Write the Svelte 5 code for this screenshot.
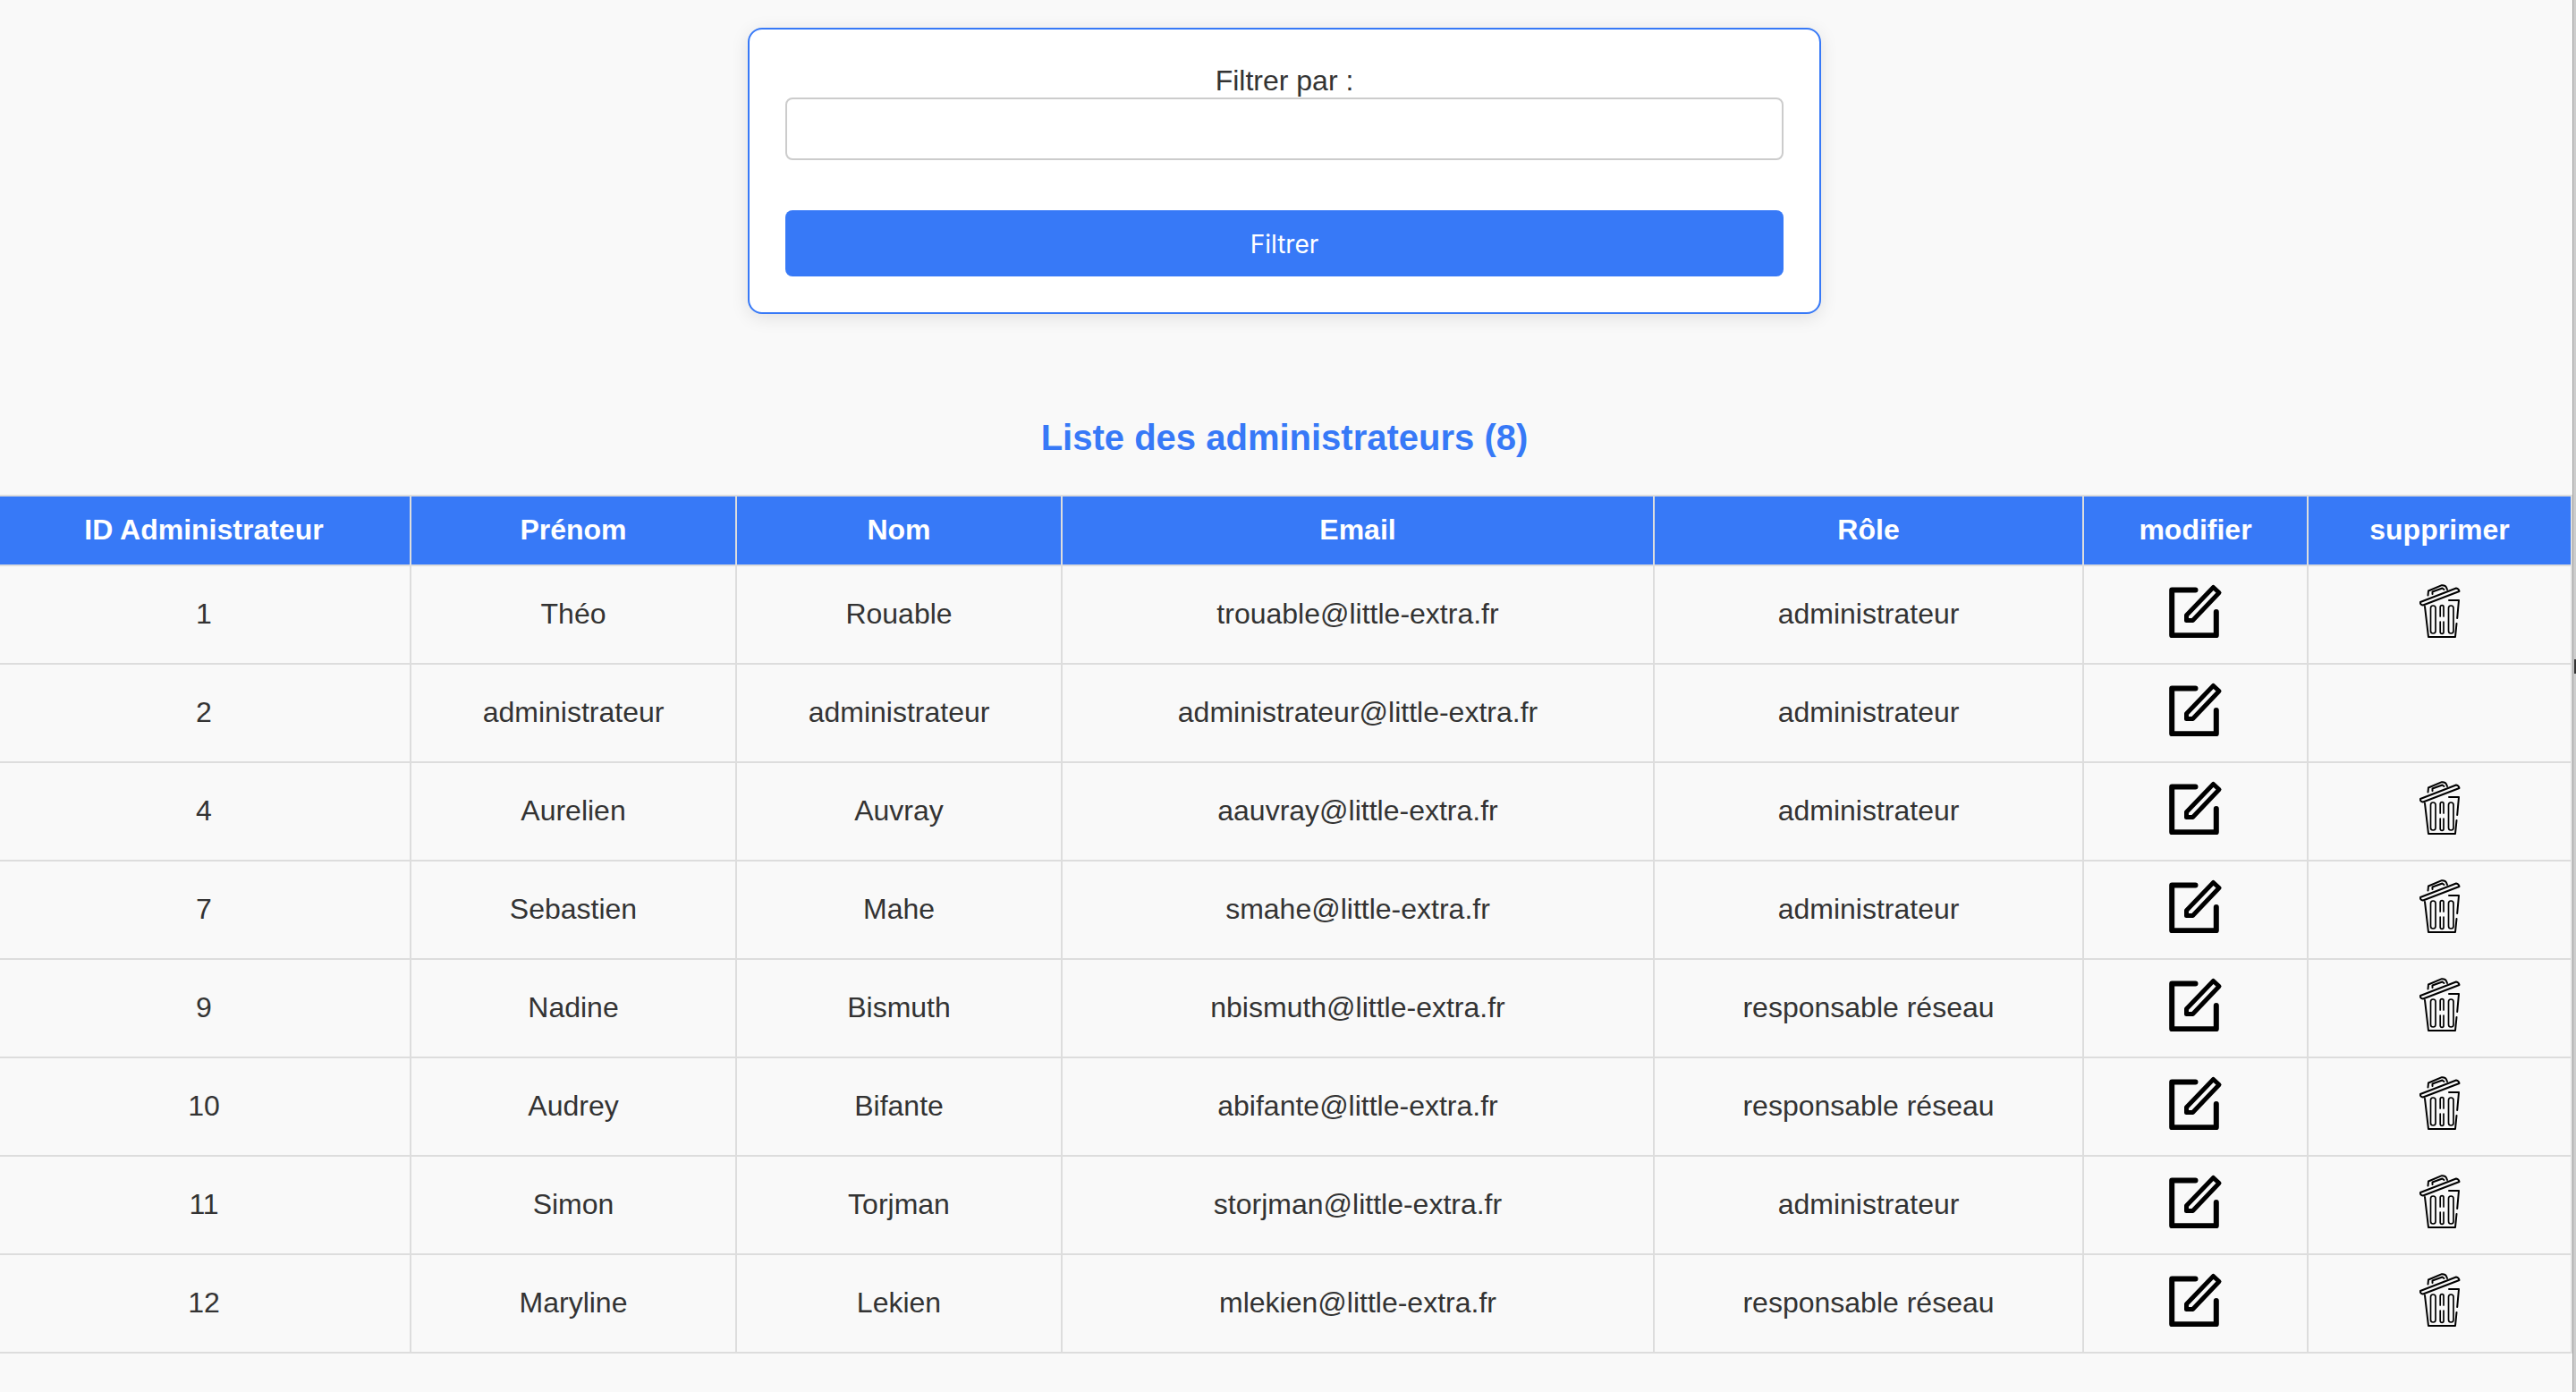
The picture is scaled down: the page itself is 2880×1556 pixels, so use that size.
<script>
  const admins = [
    { id: 1, prenom: "Théo", nom: "Rouable", email: "trouable@little-extra.fr", role: "administrateur" },
    { id: 2, prenom: "administrateur", nom: "administrateur", email: "administrateur@little-extra.fr", role: "administrateur", locked: true },
    { id: 4, prenom: "Aurelien", nom: "Auvray", email: "aauvray@little-extra.fr", role: "administrateur" },
    { id: 7, prenom: "Sebastien", nom: "Mahe", email: "smahe@little-extra.fr", role: "administrateur" },
    { id: 9, prenom: "Nadine", nom: "Bismuth", email: "nbismuth@little-extra.fr", role: "responsable réseau" },
    { id: 10, prenom: "Audrey", nom: "Bifante", email: "abifante@little-extra.fr", role: "responsable réseau" },
    { id: 11, prenom: "Simon", nom: "Torjman", email: "storjman@little-extra.fr", role: "administrateur" },
    { id: 12, prenom: "Maryline", nom: "Lekien", email: "mlekien@little-extra.fr", role: "responsable réseau" }
  ];
</script>

<div class="shell">
  <div class="page">
    <form class="filter" on:submit|preventDefault>
      <label for="filtre">Filtrer par :</label>
      <input id="filtre" type="text" />
      <button type="submit">Filtrer</button>
    </form>

    <h2>Liste des administrateurs ({admins.length})</h2>

    <table>
      <colgroup>
        <col style="width:459px" />
        <col style="width:364px" />
        <col style="width:364px" />
        <col style="width:662px" />
        <col style="width:480px" />
        <col style="width:251px" />
        <col />
      </colgroup>
      <thead>
        <tr>
          <th>ID Administrateur</th>
          <th>Prénom</th>
          <th>Nom</th>
          <th>Email</th>
          <th>Rôle</th>
          <th>modifier</th>
          <th>supprimer</th>
        </tr>
      </thead>
      <tbody>
        {#each admins as a}
          <tr>
            <td>{a.id}</td>
            <td>{a.prenom}</td>
            <td>{a.nom}</td>
            <td>{a.email}</td>
            <td>{a.role}</td>
            <td class="icon-cell">
              <svg class="edit" viewBox="0 0 60 60" aria-hidden="true">
                <path d="M29.5 6.500H3.200V57.200H52.800V31" fill="none" stroke="#000" stroke-width="6" stroke-linecap="round" stroke-linejoin="round" />
                <path d="M19.500 34.700V40.500H26.500L56 9.500L49.500 3.500Z" fill="none" stroke="#000" stroke-width="5" stroke-linejoin="round" />
              </svg>
            </td>
            <td class="icon-cell">
              {#if !a.locked}
                <svg class="trash" viewBox="0 0 46 60" aria-hidden="true">
                  <g fill="none" stroke="#000" stroke-width="2" stroke-linejoin="round" stroke-linecap="round">
                    <path d="M1 20L41 4.500Q44 5 44.500 8L4 23.500Q0.500 23 1 20Z" />
                    <path d="M9.500 12.500L10 7.500L25 1.200Q29 1 30 3.500L31 6" />
                    <path d="M14.500 11V8.500L25.500 4.500L27.500 6" />
                    <path d="M6 25L10 59H40L41.500 44M42.200 38L44 18H33" />
                  </g>
                  <g fill="none" stroke="#000" stroke-width="1.700" stroke-linecap="round">
                    <rect x="12.500" y="24" width="5.500" height="31" rx="2.700" />
                    <path d="M23.200 36V25.500a1.900 1.900 0 0 1 3.800 0V36M23.200 42V53.500a1.900 1.900 0 0 0 3.800 0V42" />
                    <rect x="32.500" y="24" width="5.500" height="31" rx="2.700" />
                  </g>
                </svg>
              {/if}
            </td>
          </tr>
        {/each}
      </tbody>
    </table>
  </div>
  <div class="edge"><span class="edge-mark"></span></div>
</div>

<style>
  :global(body) {
    background: #f9f9f9;
  }

  .shell {
    display: flex;
    height: 1556px;
    overflow: hidden;
  }

  .page {
    width: 2876px;
    flex: none;
    font-family: "Liberation Sans", Arial, sans-serif;
    color: #333;
  }

  /* fine bande grise du bord droit */
  .edge {
    position: relative;
    width: 4px;
    flex: none;
    background: linear-gradient(90deg, #a2a2a2 1px, #cdcdcd 1px);
  }

  .edge-mark {
    position: absolute;
    top: 737px;
    right: 0;
    width: 2px;
    height: 16px;
    border-right: 2px solid #333;
    border-bottom: 2px solid #333;
    box-sizing: border-box;
  }

  .filter {
    width: 1200px;
    box-sizing: border-box;
    margin: 31px 0 0 836px;
    padding: 40px;
    height: 320px;
    background: #fff;
    border: 2px solid #3779f7;
    border-radius: 16px;
    box-shadow: 0 4px 20px rgba(0, 0, 0, 0.1);
    display: flex;
    flex-direction: column;
    align-items: stretch;
  }

  label {
    text-align: center;
    font-size: 32px;
    line-height: 36px;
    margin-top: -1px;
    margin-bottom: 1px;
  }

  input {
    height: 70px;
    box-sizing: border-box;
    border: 2px solid #ccc;
    border-radius: 8px;
    background: #fff;
    margin-bottom: 56px;
  }

  button {
    height: 75px;
    padding: 2px 0 0;
    border: none;
    border-radius: 8px;
    background: #3779f7;
    color: #fff;
    font-family: Inter, "Liberation Sans", sans-serif;
    font-size: 28px;
  }

  h2 {
    margin: 108px 0 0 0;
    height: 60px;
    line-height: 60px;
    width: 2872px;
    text-align: center;
    color: #3779f7;
    font-size: 40px;
    font-weight: 700;
  }

  table {
    width: 2876px;
    table-layout: fixed;
    border-collapse: collapse;
    margin-top: 34px;
  }

  th {
    height: 74px;
    padding: 0 0 2px;
    background: #3779f7;
    color: #fff;
    font-size: 32px;
    font-weight: 700;
    border: 2px solid #ddd;
  }

  td {
    height: 106px;
    padding: 0 0 2px;
    text-align: center;
    font-size: 32px;
    color: #333;
    border: 2px solid #ddd;
  }

  th:first-child,
  td:first-child {
    border-left: 0;
    padding-right: 2px;
  }

  .icon-cell {
    height: 100px;
    padding-bottom: 8px;
  }

  svg {
    display: block;
    margin: 0 auto;
    height: 60px;
  }

  .edit {
    width: 60px;
  }

  .trash {
    width: 46px;
  }
</style>
